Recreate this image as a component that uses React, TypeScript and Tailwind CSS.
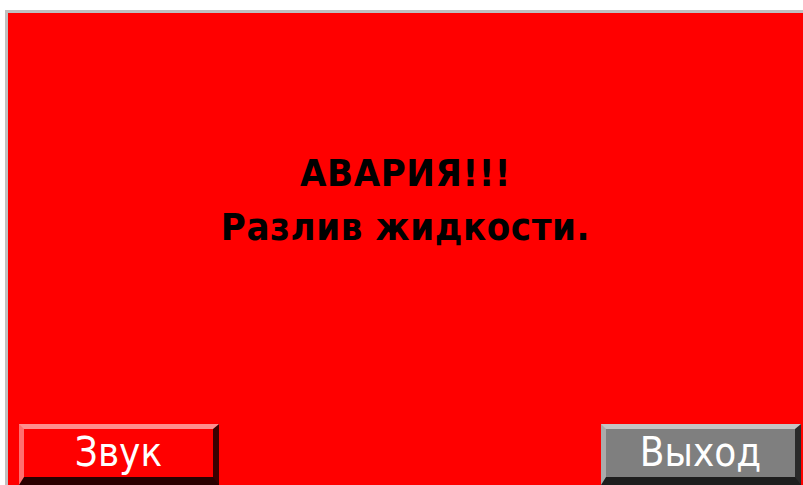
const condensed = { fontFamily: '"DejaVu Sans Condensed", "DejaVu Sans", sans-serif' };

function PanelButton({ label, tone }: { label: string; tone: "red" | "gray" }) {
  const toneClass =
    tone === "red"
      ? "bg-[#ff0000] border-t-[#ff8e8e] border-l-[#ff7070] border-r-[#3a0000] border-b-[#2a0000]"
      : "bg-[#7f7f7f] border-t-[#c4c4c4] border-l-[#aaaaaa] border-r-[#2a2a2a] border-b-[#1e1e1e]";

  return (
    <button
      className={`flex h-[61px] w-[200px] items-start justify-center border-t-[5px] border-l-[5px] border-r-[6px] border-b-[8px] pt-[3px] text-[40px] leading-none text-white ${toneClass}`}
      style={condensed}
    >
      {label}
    </button>
  );
}

export default function App() {
  return (
    <div className="h-[485px] w-[803px] overflow-hidden bg-white pl-[5px] pt-[10px]">
      <div className="flex h-full flex-col border-l-[3px] border-t-[3px] border-[#c0c0c0] bg-[#ff0000]">
        <div
          className="flex flex-1 flex-col items-center pt-[133px] text-[38px] font-bold leading-[54px] tracking-[0.6px] text-black"
          style={condensed}
        >
          <p>АВАРИЯ!!!</p>
          <p>Разлив жидкости.</p>
        </div>
        <div className="flex justify-between pl-[11px] pr-[2px]">
          <PanelButton label="Звук" tone="red" />
          <PanelButton label="Выход" tone="gray" />
        </div>
      </div>
    </div>
  );
}
